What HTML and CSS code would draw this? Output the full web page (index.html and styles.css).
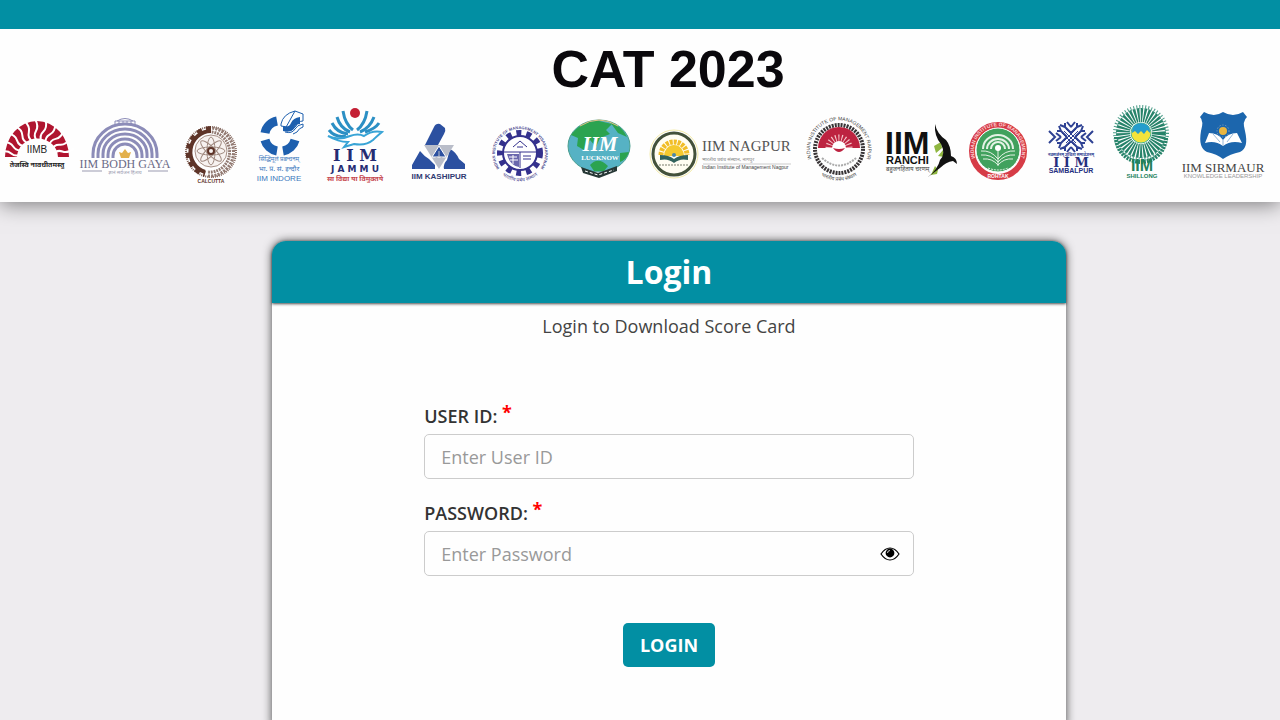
FILE: index.html
```
<!DOCTYPE html>
<html lang="en">

<head>
  <meta charset="UTF-8">
  <meta name="viewport" content="width=device-width, initial-scale=1.0">
  <title>CAT 2023 - Login</title>
  <link rel="stylesheet" href="styles.css">
</head>

<body>

  <div class="topbar"></div>

  <header class="header">
    <h1 class="title">CAT 2023</h1>

    <div class="logos">
      <!-- Bangalore -->
      <svg viewBox="0 100 75 90">
        <path d="M5 157A32 36 0 0 1 69 157L58 157A20 18 0 0 0 17 157Z" fill="#b01530" />
        <g fill="none" stroke="#fff" stroke-width="2">
          <path id="ray" d="M37 141Q33 136 36 131T35 119" />
          <use href="#ray" transform="rotate(-80 37 157)" />
          <use href="#ray" transform="rotate(-64 37 157)" />
          <use href="#ray" transform="rotate(-48 37 157)" />
          <use href="#ray" transform="rotate(-32 37 157)" />
          <use href="#ray" transform="rotate(-16 37 157)" />
          <use href="#ray" transform="rotate(16 37 157)" />
          <use href="#ray" transform="rotate(32 37 157)" />
          <use href="#ray" transform="rotate(48 37 157)" />
          <use href="#ray" transform="rotate(64 37 157)" />
          <use href="#ray" transform="rotate(80 37 157)" />
        </g>
        <text x="37" y="153" class="sans" font-size="10" fill="#222">IIMB</text>
        <text x="37" y="167" class="hindi" font-size="7" font-weight="bold" fill="#222">तेजस्वि नावधीतमस्तु</text>
      </svg>

      <!-- Bodh Gaya -->
      <svg viewBox="75 100 100 90">
        <g fill="none" stroke="#8c8cb8" stroke-width="3">
          <path d="M93 158V154A32 30 0 0 1 157 154V158" />
          <path d="M98 158V154A27 25 0 0 1 152 154V158" />
          <path d="M103 158V154A22 20 0 0 1 147 154V158" />
          <path d="M108 158V155A17 16 0 0 1 142 155V158" />
          <path d="M113 158V156A12 12 0 0 1 137 156V158" />
          <path d="M115 125V121H135V125M117 121Q125 116 133 121M119 121V125M123 121V125M127 121V125M131 121V125" stroke-width="1" />
        </g>
        <path d="M125 149L128 153L131 152L129 158H121L119 152L122 153Z" fill="#e3b04b" />
        <text x="125" y="168" class="serif" font-size="12" fill="#6a6a86">IIM BODH GAYA</text>
        <path d="M82 171H102M148 171H168" stroke="#9a9ab0" />
        <text x="125" y="174" class="hindi" font-size="5" fill="#9a9ab0">ज्ञानं सर्वजन हिताय</text>
      </svg>

      <!-- Calcutta -->
      <svg viewBox="175 100 72 90">
        <g fill="none">
          <circle cx="211" cy="152" r="25" stroke="#86695f" stroke-width="2" stroke-dasharray="1 1" />
          <path d="M211 131A21 21 0 0 0 205 172" stroke="#5e3428" stroke-width="4" />
          <path d="M211 129A23 23 0 0 0 205 174" stroke="#5e3428" stroke-width="6" stroke-dasharray="5 4" />
          <path d="M212 130A22 22 0 0 1 207 174" stroke="#927a72" stroke-width="7" stroke-dasharray="2 1" />
          <path d="M212 130A22 22 0 0 1 207 174" stroke="#fff" stroke-width="1" />
          <circle cx="211" cy="151" r="16" fill="#f7f2f0" stroke="#a68f85" />
          <g stroke="#a08a80" stroke-width="1">
            <ellipse id="petal" cx="211" cy="151" rx="4" ry="14" />
            <use href="#petal" transform="rotate(45 211 151)" />
            <use href="#petal" transform="rotate(90 211 151)" />
            <use href="#petal" transform="rotate(135 211 151)" />
          </g>
          <circle cx="211" cy="151" r="3" stroke="#5e3428" stroke-width="2" />
        </g>
        <text x="211" y="183" class="sans" font-size="5" font-weight="bold" fill="#5e3428">CALCUTTA</text>
      </svg>

      <!-- Indore -->
      <svg viewBox="247 100 68 90">
        <g fill="none" stroke="#1d5fae" stroke-width="9">
          <path d="M265 133A15 15 0 0 1 277 121" />
          <path d="M265 140A15 15 0 0 0 277 151" />
          <path d="M283 151A15 15 0 0 0 295 140" />
        </g>
        <path d="M281 124Q283 114 295 111V118Q291 119 290 125Q286 128 281 126Z" fill="#fff" stroke="#1d5fae" />
        <path d="M295 111L303 114V121Q298 121 296 126L292 130L285 129Z" fill="#fff" stroke="#1d5fae" />
        <path d="M283 126Q289 128 291 123Q293 118 300 117V124Q295 124 294 129Q290 133 283 131Z" fill="#1d5fae" />
        <path d="M285 132Q292 134 295 129Q297 125 303 124V127Q299 128 297 132L293 134" fill="none" stroke="#1d5fae" />
        <g class="hindi" fill="#3b78bd">
          <text x="279" y="161" font-size="6">सिद्धिमूलं प्रबन्धनम्</text>
          <text x="279" y="171" font-size="7">भा. प्र. सं. इन्दौर</text>
        </g>
        <text x="279" y="181" class="sans" font-size="8" fill="#3b78bd">IIM INDORE</text>
      </svg>

      <!-- Jammu -->
      <svg viewBox="315 100 83 90">
        <circle cx="355" cy="113" r="5" fill="#c41f34" />
        <g fill="none" stroke="#2b8fc4" stroke-width="3">
          <path d="M343 111Q345 124 353 130" />
          <path d="M367 111Q365 124 357 130" />
          <path d="M337 117Q340 128 350 132" />
          <path d="M374 117Q370 128 360 132" />
          <path d="M332 123Q337 133 348 134" />
          <path d="M379 123Q375 129 365 132" />
          <path d="M329 130Q335 138 346 136" />
        </g>
        <path d="M328 136Q338 141 350 136Q358 133 364 136Q372 130 382 132Q376 137 373 140Q366 146 354 144L344 147L348 142Q338 142 328 136Z" fill="#fff" stroke="#38a4d6" stroke-width="2" />
        <text x="355" y="161" class="slab" font-size="16" fill="#252c72">I I M</text>
        <text x="355" y="172" class="wide" font-size="9" fill="#252c72">J A M M U</text>
        <text x="355" y="181" class="hindi" font-size="7" font-weight="bold" fill="#c6484f">सा विद्या या विमुक्तये</text>
      </svg>

      <!-- Kashipur -->
      <svg viewBox="398 100 82 90">
        <g fill="#2c50a0">
          <path d="M425 145L434 127Q436 123 440 124L445 128Q446 131 444 134L438 145Z" />
          <path d="M412 169V165L420 151Q424 156 429 159L435 165V169Z" />
          <path d="M444 169Q443 164 447 160L450 149Q456 152 459 159L465 164V169Z" />
        </g>
        <path d="M424 145H454L439 169Z" fill="#b9bdc9" />
        <path d="M432 157L439 146L446 157Z" fill="#2c50a0" stroke="#fff" />
        <path d="M439 151V156M434 159L439 156L444 159" fill="none" stroke="#b9bdc9" />
        <text x="439" y="179" class="sans" font-size="8" font-weight="bold" fill="#303a72">IIM KASHIPUR</text>
      </svg>

      <!-- Visakhapatnam -->
      <svg viewBox="480 100 77 90">
        <path id="arc-vizag" d="M500 169A25 25 0 1 1 540 169" fill="none" />
        <path id="arc-vizag-low" d="M499 172A28 28 0 0 0 541 172" fill="none" />
        <circle cx="520" cy="153" r="20" fill="none" stroke="#34318d" stroke-width="6" stroke-dasharray="5 5" />
        <circle cx="520" cy="153" r="17" fill="#fff" stroke="#34318d" stroke-width="2" />
        <path d="M503 152H537M520 152V168M513 147L520 141L527 147M517 147H523M523 156H531M523 159H531" fill="none" stroke="#34318d" />
        <path d="M507 154H519V167Q510 166 507 154Z" fill="#6a67ad" />
        <path d="M509 157H517M510 160H518M513 155V164" stroke="#fff" />
        <text class="sans" font-size="4" font-weight="bold" fill="#4a488e"><textPath href="#arc-vizag" startOffset="50%">INDIAN INSTITUTE OF MANAGEMENT VISAKHAPATNAM</textPath></text>
        <text class="hindi" font-size="5" fill="#4a488e"><textPath href="#arc-vizag-low" startOffset="50%">भारतीय प्रबंध संस्थान</textPath></text>
      </svg>

      <!-- Lucknow -->
      <svg viewBox="557 100 83 90">
        <ellipse cx="599" cy="146" rx="31" ry="26" fill="#56b2c4" stroke="#4b9f8f" />
        <path d="M571 135Q582 120 599 121L612 124L606 130L610 134L600 138L596 147L590 140L584 150L577 146L578 138Z" fill="#2ba350" />
        <path d="M610 122Q622 126 627 137L618 133ZM590 165Q598 156 608 166L604 171H594ZM620 153L629 152Q626 160 620 162Z" fill="#2ba350" />
        <path d="M580 126Q599 114 618 126" fill="none" stroke="#e2c37f" stroke-width="1" />
        <path d="M581 167L598 173L617 166V171L599 178L583 173Z" fill="#263735" />
        <path d="M585 171L598 175L614 170" fill="none" stroke="#fff" stroke-dasharray="3 2" />
        <text x="600" y="151" class="serif" font-size="21" font-weight="bold" font-style="italic" fill="#fff">IIM</text>
        <text x="600" y="160" class="serif" font-size="7" font-weight="bold" fill="#fff">LUCKNOW</text>
      </svg>

      <!-- Nagpur -->
      <svg viewBox="640 100 158 90">
        <circle cx="674" cy="154" r="21" fill="#fffdf2" stroke="#43513a" stroke-width="3" />
        <circle cx="674" cy="154" r="24" fill="none" stroke="#f3eba9" />
        <path d="M664 156A10 11 0 0 1 684 156Z" fill="#f4c92e" />
        <path d="M661 155A13 13 0 0 1 687 155" fill="none" stroke="#f1bd27" stroke-width="5" stroke-dasharray="3 1" />
        <path d="M660 155Q669 155 674 159Q679 155 688 155V160Q680 158 674 163Q668 158 660 160Z" fill="#31625b" />
        <circle cx="674" cy="155" r="2" fill="#4c87a5" />
        <path d="M659 165H689" stroke="#797c6d" stroke-dasharray="2 1" />
        <text x="702" y="151" class="serif start" font-size="15" fill="#555">IIM NAGPUR</text>
        <text x="702" y="161" class="hindi start" font-size="5" fill="#888">भारतीय प्रबंध संस्थान, नागपुर</text>
        <path d="M703 164H791" stroke="#ccc" />
        <text x="702" y="169" class="sans start" font-size="5" fill="#444">Indian Institute of Management Nagpur</text>
      </svg>

      <!-- Raipur -->
      <svg viewBox="798 100 82 90">
        <path id="arc-raipur" d="M816 167A29 29 0 1 1 862 167" fill="none" />
        <path id="arc-raipur-low" d="M813 168A33 33 0 0 0 865 168" fill="none" />
        <circle cx="839" cy="149" r="24" fill="none" stroke="#383436" stroke-width="4" stroke-dasharray="2 1" />
        <path d="M818 148A21 21 0 0 1 860 148Z" fill="#bd2340" />
        <path d="M829 148A10 10 0 0 1 849 148" fill="none" stroke="#f5c8cb" stroke-width="7" stroke-dasharray="1 2" />
        <path d="M832 148A7 7 0 0 1 846 148L839 152Z" fill="#fff" />
        <path d="M833 148Q839 156 845 148Q839 150 833 148Z" fill="#bd2340" />
        <path d="M822 158Q839 173 856 158" fill="none" stroke="#aaa" stroke-width="2" stroke-dasharray="2 1" />
        <text class="sans" font-size="5" fill="#444"><textPath href="#arc-raipur" startOffset="50%">INDIAN INSTITUTE OF MANAGEMENT RAIPUR</textPath></text>
        <text class="hindi" font-size="5" fill="#444"><textPath href="#arc-raipur-low" startOffset="50%">भारतीय प्रबंध संस्थान</textPath></text>
      </svg>

      <!-- Ranchi -->
      <svg viewBox="880 100 83 90">
        <text x="885" y="154" class="sans start" font-size="32" font-weight="bold" fill="#111">IIM</text>
        <text x="886" y="164" class="sans start" font-size="11" font-weight="bold" fill="#111">RANCHI</text>
        <text x="886" y="171" class="hindi start" font-size="6" fill="#444">बहुजनहिताय चरणम्</text>
        <path d="M934 146L941 142L942 148L936 153ZM938 156L943 150L944 157ZM931 175L935 166L938 170L937 174Z" fill="#8fb640" />
        <path d="M935 124Q937 134 946 140Q951 146 951 156Q957 158 957 164L953 161Q946 162 940 168L928 177Q938 169 940 160Q946 154 941 144Q934 136 935 124Z" fill="#111" />
      </svg>

      <!-- Rohtak -->
      <svg viewBox="963 100 73 90">
        <path id="arc-rohtak" d="M980 166A24 24 0 1 1 1016 166" fill="none" />
        <circle cx="998" cy="151" r="26" fill="none" stroke="#d63c47" stroke-width="6" />
        <circle cx="998" cy="150" r="22" fill="#41a15d" stroke="#fff" />
        <g fill="none" stroke="#e4f2e5">
          <path d="M983 149A15 14 0 0 1 1013 149M987 149A11 10 0 0 1 1009 149M991 149A7 7 0 0 1 1005 149" stroke-width="2" />
          <path d="M981 151Q991 150 998 159Q1005 150 1015 151M981 155Q991 154 998 162Q1005 154 1015 155M983 159Q992 158 998 165Q1004 158 1013 159M998 148V166" />
        </g>
        <circle cx="998" cy="148" r="3" fill="#fff" />
        <path d="M988 168Q998 172 1008 168" fill="none" stroke="#e4f2e5" stroke-dasharray="2 1" />
        <text class="sans" font-size="5" font-weight="bold" fill="#fbd5d5"><textPath href="#arc-rohtak" startOffset="50%">INDIAN INSTITUTE OF MANAGEMENT</textPath></text>
        <text x="998" y="178" class="sans" font-size="5" font-weight="bold" fill="#fff">ROHTAK</text>
      </svg>

      <!-- Sambalpur -->
      <svg viewBox="1036 100 69 90">
        <g fill="none" stroke="#2e4193">
          <path d="M1064 131L1076 143M1062 133L1074 145M1066 129L1078 141M1078 131L1066 143M1080 133L1068 145M1076 129L1064 141" />
          <g id="corner" stroke-width="2">
            <path d="M1071 133L1065 127V123M1071 133L1077 127V123M1065 127L1060 125M1077 127L1082 125M1071 127L1067 122M1071 127L1075 122" />
          </g>
          <use href="#corner" transform="rotate(90 1071 137)" />
          <use href="#corner" transform="rotate(180 1071 137)" />
          <use href="#corner" transform="rotate(270 1071 137)" />
          <path d="M1049 131L1055 137L1049 143M1093 131L1087 137L1093 143" stroke-width="2" />
        </g>
        <text x="1071" y="156" class="hindi" font-size="4" font-weight="bold" fill="#2e4193">नवसर्जनम् शुचिता समावेशनम्</text>
        <text x="1071" y="167" class="slab" font-size="13" fill="#252f7e">I I M</text>
        <text x="1071" y="173" class="sans" font-size="7" font-weight="bold" fill="#252f7e">SAMBALPUR</text>
      </svg>

      <!-- Shillong -->
      <svg viewBox="1105 100 71 90">
        <circle cx="1141" cy="133" r="18" fill="none" stroke="#27836a" stroke-width="14" stroke-dasharray="2 1" />
        <circle cx="1141" cy="133" r="26" fill="none" stroke="#4b9c88" stroke-width="4" stroke-dasharray="1 2" />
        <path d="M1116 137A25 25 0 0 0 1166 137" fill="none" stroke="#27836a" stroke-width="4" stroke-dasharray="2 1" />
        <circle cx="1141" cy="133" r="10" fill="#f3e33b" stroke="#49b58c" />
        <path d="M1132 133Q1131 124 1141 123Q1151 124 1150 133L1147 130L1144 134L1141 131L1138 134L1135 131Z" fill="#269dcd" />
        <text x="1142" y="171" class="sans" font-size="16" font-weight="bold" fill="#22805b">IIM</text>
        <text x="1142" y="178" class="sans" font-size="6" font-weight="bold" fill="#22805b">SHILLONG</text>
      </svg>

      <!-- Sirmaur -->
      <svg viewBox="1176 100 104 90">
        <path d="M1204 112Q1214 118 1223 112Q1233 118 1243 112L1247 117Q1242 121 1245 131Q1249 148 1240 152Q1230 154 1223 159Q1217 154 1207 152Q1198 148 1201 131Q1204 121 1200 117Z" fill="#1c66ad" />
        <circle cx="1223" cy="131" r="4" fill="#eab640" />
        <circle cx="1223" cy="131" r="6" fill="none" stroke="#8faec2" stroke-dasharray="1 2" />
        <path d="M1205 143L1209 133Q1218 133 1223 140Q1228 133 1237 133L1242 143Q1231 140 1223 146Q1215 140 1205 143Z" fill="#fff" />
        <path d="M1223 140V146M1213 134L1220 142M1233 134L1227 142" stroke="#95b7d9" />
        <text x="1223" y="172" class="serif" font-size="13" fill="#444">IIM SIRMAUR</text>
        <text x="1223" y="178" class="sans" font-size="6" fill="#999">KNOWLEDGE LEADERSHIP</text>
      </svg>
    </div>
  </header>

  <main class="main">
    <div class="card">
      <h2 class="card-title">Login</h2>
      <p class="card-text">Login to Download Score Card</p>

      <form class="form">
        <label class="label" for="user">USER ID: <span class="star">*</span></label>
        <div class="field">
          <input type="text" id="user" class="input" placeholder="Enter User ID">
        </div>
        <label class="label" for="password">PASSWORD: <span class="star">*</span></label>
        <div class="field">
          <input type="password" id="password" class="input" placeholder="Enter Password">
          <button type="button" class="eye" aria-label="Show password">
            <svg width="20" height="14" viewBox="0 0 20 14">
              <path d="M1 7Q5 1 10 1T19 7Q15 13 10 13T1 7Z" fill="#fff" stroke="#000" stroke-width="1.2" />
              <circle cx="10" cy="6" r="4.4" />
              <path d="M7.5 6Q7.5 3.5 10 3.5" fill="none" stroke="#fff" stroke-width=".8" />
            </svg>
          </button>
        </div>
        <button type="submit" class="btn">LOGIN</button>
      </form>
    </div>
  </main>

</body>

</html>
```
FILE: styles.css
```
* {
  margin: 0;
  padding: 0;
  box-sizing: border-box;
}

body {
  display: flex;
  flex-direction: column;
  min-height: 100vh;
  background: #eeecef;
  font-family: "Open Sans", sans-serif;
  font-size: 18px;
  color: #333;
}

.topbar {
  position: relative;
  z-index: 1;
  height: 29px;
  background: #028fa3;
}

.header {
  padding-bottom: 12px;
  background: #fefefe;
  box-shadow: 0 2px 20px rgba(0, 0, 0, .5);
}

.title {
  padding: 10px 0 1px 56px;
  text-align: center;
  font: bold 52px/60px "Liberation Sans", Arial, sans-serif;
  color: #0a080c;
}

/* logos */
.logos {
  display: grid;
  grid-template-columns: 75fr 100fr 72fr 68fr 83fr 82fr 77fr 83fr 158fr 82fr 83fr 73fr 69fr 71fr 104fr;
}

.logos svg {
  display: block;
  width: 100%;
}

.logos text {
  text-anchor: middle;
}

.logos .start {
  text-anchor: start;
}

.sans {
  font-family: "Liberation Sans", Arial, sans-serif;
}

.serif {
  font-family: "Liberation Serif", "Times New Roman", serif;
}

.slab {
  font-family: "DejaVu Serif", serif;
  font-weight: bold;
}

.wide {
  font-family: "DejaVu Sans", sans-serif;
  font-weight: bold;
}

.hindi {
  font-family: "Noto Sans Devanagari", "Noto Sans", sans-serif;
}

/* login */
.main {
  flex: 1;
  display: flex;
  justify-content: center;
  padding: 39px 0 0 58px;
}

.card {
  width: 65%;
  background: #fefefe;
  border-radius: 14px 14px 0 0;
  box-shadow: 0 0 10px rgba(0, 0, 0, .7);
}

.card-title {
  border-radius: 14px 14px 0 0;
  background: #028fa3;
  box-shadow: 0 1px 3px rgba(0, 0, 0, .7);
  text-align: center;
  font-size: 32px;
  line-height: 62px;
  color: #fff;
}

.card-text {
  padding-top: 11px;
  text-align: center;
  line-height: 24px;
  color: #444;
}

.form {
  width: 66.66%;
  margin: 0 auto;
  padding: 60px 20px;
}

.label {
  display: block;
  height: 36px;
  line-height: 36px;
  font-weight: 600;
}

.star {
  color: #f00;
  vertical-align: 4px;
  line-height: 1;
  font-weight: bold;
}

.field {
  position: relative;
  margin-bottom: 16px;
}

.input {
  display: block;
  width: 100%;
  height: 45px;
  padding: 0 16px;
  border: 1px solid #ccc;
  border-radius: 5px;
  background: #fefefe;
  font: inherit;
  color: #333;
}

.input::placeholder {
  color: #999;
}

.eye {
  position: absolute;
  top: 15px;
  right: 14px;
  height: 15px;
  border: 0;
  background: none;
  cursor: pointer;
}

.eye svg {
  display: block;
}

.btn {
  display: block;
  height: 44px;
  margin: 47px auto 0;
  padding: 0 17px;
  border: 0;
  border-radius: 5px;
  background: #028fa3;
  font: bold 18px "Open Sans", sans-serif;
  color: #fff;
  cursor: pointer;
}
```
